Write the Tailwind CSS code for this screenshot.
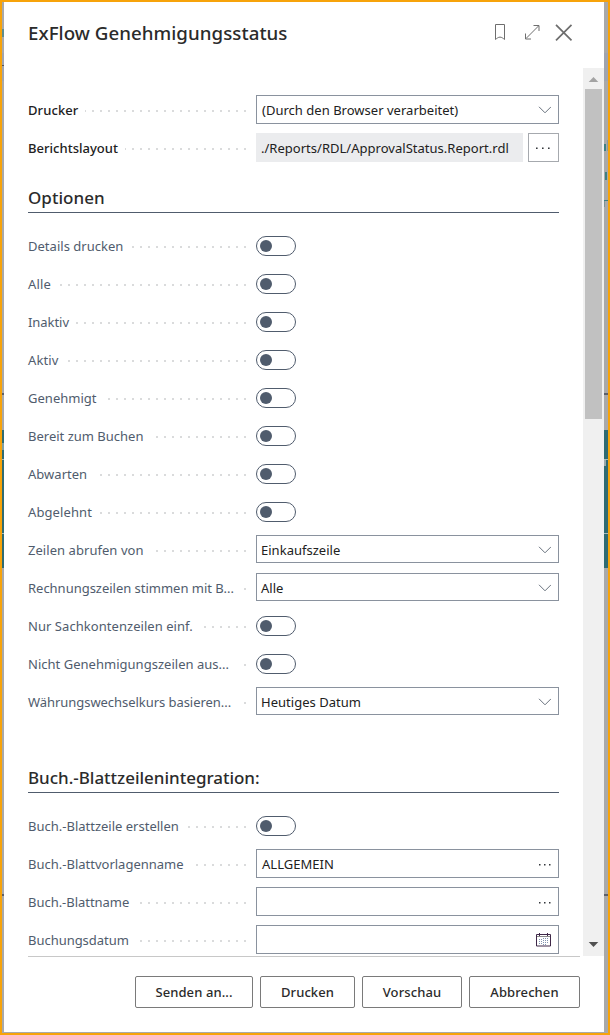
<!DOCTYPE html>
<html lang="de">
<head>
<meta charset="utf-8">
<title>ExFlow Genehmigungsstatus</title>
<script src="https://cdn.jsdelivr.net/npm/@tailwindcss/browser@4"></script>
<style>
.dots{background:linear-gradient(90deg,transparent 6px,#dadbdc 6px) right 1px top 19px/8px 2px repeat-x}
.sw{width:40px;height:20px;border:1px solid #505c6d;border-radius:10px;padding:3px;flex:none}
.sw::before{content:"";display:block;width:12px;height:12px;border-radius:50%;background:#505c6d}
</style>
</head>
<body class="h-[1035px] w-[610px] overflow-hidden bg-white font-['Noto_Sans','Open_Sans',sans-serif] text-[13px] tracking-[0.02px] text-[#212121]">
<div class="relative h-[1035px] border-2 border-[#f7a30a] bg-[#a9a9a9] pl-[2px] pr-[4px]">
  <!-- page behind the dialog -->
  <div class="absolute inset-0">
    <div class="absolute inset-x-0 top-[51px] h-[28px] bg-[#a0a4ae]"></div>
    <div class="absolute left-0 top-[27px] h-[8px] w-[2px] bg-[#5f8d8f]"></div>
    <div class="absolute left-0 top-[63px] h-px w-[2px] bg-[#555]"></div>
    <div class="absolute inset-x-0 top-[391px] h-[2px] bg-[#5c606b]"></div>
    <div class="absolute inset-x-0 top-[428px] h-[138px] bg-[#2f6b72]"></div>
    <div class="absolute inset-x-0 top-[457px] h-px bg-[#a9bcbe]"></div>
    <div class="absolute left-0 top-[441px] h-[7px] w-[2px] bg-[#7f9fa2]"></div>
    <div class="absolute right-[2px] top-[458px] h-[6px] w-[2px] bg-[#9aa9aa]"></div>
    <div class="absolute inset-x-0 top-[531px] h-px bg-[#a9bcbe]"></div>
    <div class="absolute inset-x-0 top-[892px] h-[2px] bg-[#5c606b]"></div>
    <div class="absolute right-[2px] top-[142px] h-[7px] w-[2px] bg-[#3f7f82]"></div>
    <div class="absolute right-0 top-[138px] h-[11px] w-px bg-[#8a9c9d]"></div>
    <div class="absolute right-[1px] top-[170px] h-[8px] w-[2px] bg-[#3f7f82]"></div>
    <div class="absolute right-0 top-[198px] h-px w-[4px] bg-[#3f7f82]"></div>
    <div class="absolute right-[3px] top-[199px] h-[6px] w-px bg-[#7d9293]"></div>
  </div>

  <main class="relative flex h-[1030px] w-[600px] flex-col bg-white">
    <header class="flex h-[66px] flex-none items-start pl-[24px]">
      <h1 class="mt-[15px] w-[467px] text-[18.7px] font-medium leading-[32px] tracking-[0.05px] text-[#2b2b2b]">ExFlow Genehmigungsstatus</h1>
      <svg class="mt-[22px]" width="80" height="18" fill="none" stroke="#6e6e6e">
        <path d="M.5.5h9v15c-1-.9-2.8-2.4-4.5-2.4S1.500 14.600.5 15.500z"/>
        <path d="M31 14.500 43.500 2M38.500 1.500h5.500V7M30.500 9.500V15H36"/>
        <path stroke-width="1.700" d="m61 .8 15.500 15.500m0-15.500L61 16.300"/>
      </svg>
    </header>

    <div class="flex h-[888px] flex-none">
      <section class="h-[888px] w-[579px] overflow-hidden pl-[24px] pr-[24px] pt-[23px]">
        <div class="flex h-[38px] leading-[38px]">
          <label class="w-[57px] font-medium tracking-[0.1px]">Drucker</label><i class="dots flex-1"></i>
          <div class="ml-[9px] mt-[4px] flex h-[29px] w-[303px] items-center justify-between border border-[#8a929e] pl-[5px] pr-[7px] pt-px leading-[28px]">(Durch den Browser verarbeitet)<svg width="13" height="8" fill="none" stroke="#69727e"><path d="M1 .8 7 6.800 13 .8"/></svg></div>
        </div>
        <div class="flex h-[38px] leading-[38px]">
          <label class="w-[97px] font-medium">Berichtslayout</label><i class="dots flex-1"></i>
          <div class="ml-[9px] mt-[4px] h-[29px] w-[267px] bg-[#ebecee] pl-[5px] leading-[31px]">./Reports/RDL/ApprovalStatus.Report.rdl</div>
          <button class="ml-[5px] mt-[4px] flex h-[29px] w-[31px] items-center justify-center border border-[#a6a9ae] pt-px"><svg width="15" height="3" fill="#33363b"><path d="M0 .5h1.600v1.600H0zM6 .5h1.600v1.600H6zM12 .5h1.600v1.600H12z"/></svg></button>
        </div>

        <h2 class="mb-[14px] mt-[11px] h-[35px] border-b border-[#505c6d] text-[17px] font-medium leading-[40px] text-[#2b2b2b]">Optionen</h2>

        <div class="flex h-[38px] leading-[38px] text-[#505c6d]"><label class="w-[102px]">Details drucken</label><i class="dots flex-1"></i><span class="sw ml-[9px] mr-[263px] mt-[9px]"></span></div>
        <div class="flex h-[38px] leading-[38px] text-[#505c6d]"><label class="w-[30px] tracking-[0.2px]">Alle</label><i class="dots flex-1"></i><span class="sw ml-[9px] mr-[263px] mt-[9px]"></span></div>
        <div class="flex h-[38px] leading-[38px] text-[#505c6d]"><label class="w-[46px] tracking-[-0.05px]">Inaktiv</label><i class="dots flex-1"></i><span class="sw ml-[9px] mr-[263px] mt-[9px]"></span></div>
        <div class="flex h-[38px] leading-[38px] text-[#505c6d]"><label class="w-[38px] tracking-[0.1px]">Aktiv</label><i class="dots flex-1"></i><span class="sw ml-[9px] mr-[263px] mt-[9px]"></span></div>
        <div class="flex h-[38px] leading-[38px] text-[#505c6d]"><label class="w-[78px]">Genehmigt</label><i class="dots flex-1"></i><span class="sw ml-[9px] mr-[263px] mt-[9px]"></span></div>
        <div class="flex h-[38px] leading-[38px] text-[#505c6d]"><label class="w-[126px] tracking-[0px]">Bereit zum Buchen</label><i class="dots flex-1"></i><span class="sw ml-[9px] mr-[263px] mt-[9px]"></span></div>
        <div class="flex h-[38px] leading-[38px] text-[#505c6d]"><label class="w-[70px]">Abwarten</label><i class="dots flex-1"></i><span class="sw ml-[9px] mr-[263px] mt-[9px]"></span></div>
        <div class="flex h-[38px] leading-[38px] text-[#505c6d]"><label class="w-[70px] tracking-[0.1px]">Abgelehnt</label><i class="dots flex-1"></i><span class="sw ml-[9px] mr-[263px] mt-[9px]"></span></div>
        <div class="flex h-[38px] leading-[38px] text-[#505c6d]"><label class="w-[126px] tracking-[0.05px]">Zeilen abrufen von</label><i class="dots flex-1"></i>
          <div class="ml-[9px] mt-[4px] flex h-[28px] w-[303px] items-center justify-between border border-[#8a929e] pl-[4px] pr-[7px] pt-[2px] leading-[26px] text-[#212121]">Einkaufszeile<svg width="13" height="8" fill="none" stroke="#69727e"><path d="M1 .8 7 6.800 13 .8"/></svg></div></div>
        <div class="flex h-[38px] leading-[38px] text-[#505c6d]"><label class="w-[214px] whitespace-nowrap tracking-[-0.02px]">Rechnungszeilen stimmen mit B...</label><i class="dots flex-1"></i>
          <div class="ml-[9px] mt-[4px] flex h-[28px] w-[303px] items-center justify-between border border-[#8a929e] pl-[4px] pr-[7px] pt-[2px] leading-[26px] text-[#212121]">Alle<svg width="13" height="8" fill="none" stroke="#69727e"><path d="M1 .8 7 6.800 13 .8"/></svg></div></div>
        <div class="flex h-[38px] leading-[38px] text-[#505c6d]"><label class="w-[174px] tracking-[0.05px]">Nur Sachkontenzeilen einf.</label><i class="dots flex-1"></i><span class="sw ml-[9px] mr-[263px] mt-[9px]"></span></div>
        <div class="flex h-[38px] leading-[38px] text-[#505c6d]"><label class="w-[214px] whitespace-nowrap">Nicht Genehmigungszeilen aus...</label><i class="dots flex-1"></i><span class="sw ml-[9px] mr-[263px] mt-[9px]"></span></div>
        <div class="flex h-[38px] leading-[38px] text-[#505c6d]"><label class="w-[214px] whitespace-nowrap tracking-[-0.05px]">Währungswechselkurs basieren...</label><i class="dots flex-1"></i>
          <div class="ml-[9px] mt-[4px] flex h-[28px] w-[303px] items-center justify-between border border-[#8a929e] pl-[4px] pr-[7px] pt-[2px] leading-[26px] text-[#212121]">Heutiges Datum<svg width="13" height="8" fill="none" stroke="#69727e"><path d="M1 .8 7 6.800 13 .8"/></svg></div></div>

        <h2 class="mb-[14px] mt-[37px] h-[35px] border-b border-[#505c6d] text-[17px] font-medium leading-[40px] tracking-[-0.02px] text-[#2b2b2b]">Buch.-Blattzeilenintegration:</h2>

        <div class="flex h-[38px] leading-[38px] text-[#505c6d]"><label class="w-[158px] tracking-[0px]">Buch.-Blattzeile erstellen</label><i class="dots flex-1"></i><span class="sw ml-[9px] mr-[263px] mt-[9px]"></span></div>
        <div class="flex h-[38px] leading-[38px] text-[#505c6d]"><label class="w-[166px] tracking-[0px]">Buch.-Blattvorlagenname</label><i class="dots flex-1"></i>
          <div class="ml-[9px] mt-[4px] flex h-[29px] w-[303px] items-center justify-between border border-[#8a929e] pl-[5px] pr-[7px] pt-px leading-[28px] text-[#212121]">ALLGEMEIN<svg width="13" height="3" fill="#33363b"><path d="M1 1h1.500v1.500H1zM6 1h1.500v1.500H6zM11 1h1.500v1.500H11z"/></svg></div></div>
        <div class="flex h-[38px] leading-[38px] text-[#505c6d]"><label class="w-[110px] tracking-[-0.03px]">Buch.-Blattname</label><i class="dots flex-1"></i>
          <div class="ml-[9px] mt-[4px] flex h-[29px] w-[303px] items-center justify-end border border-[#8a929e] pr-[7px] pt-px"><svg width="13" height="3" fill="#33363b"><path d="M1 1h1.500v1.500H1zM6 1h1.500v1.500H6zM11 1h1.500v1.500H11z"/></svg></div></div>
        <div class="flex h-[38px] leading-[38px] text-[#505c6d]"><label class="w-[110px] tracking-[-0.03px]">Buchungsdatum</label><i class="dots flex-1"></i>
          <div class="ml-[9px] mt-[4px] flex h-[29px] w-[303px] items-center justify-end border border-[#8a929e] pr-[7px]">
            <svg width="15" height="15" fill="none" stroke="#3f2848"><path d="M.5 2.500h14v11.500H.5z"/><path stroke="#8a8a8a" d="M1 4.500h13"/><path d="M3.500 1v3M11.500 1v3"/><path stroke="#8194b0" stroke-dasharray="1 1" d="M3.500 7v6M5.500 7v6M7.500 6v7M9.500 6v7M11.500 6v6"/></svg></div></div>
      </section>
      <div class="flex h-[888px] w-[21px] flex-col items-center bg-[#f0f0f0]">
        <svg class="flex-none" width="17" height="21" fill="#a3a3a3"><path d="M8.500 9 13.300 14H3.700z"/></svg>
        <div class="h-[330px] w-[17px] bg-[#c1c1c1]"></div>
        <svg class="mt-auto flex-none" width="17" height="21" fill="#505050"><path d="M8.500 12 3.700 7h9.600z"/></svg>
      </div>
    </div>

    <footer class="ml-[24px] flex h-[52px] w-[552px] flex-none items-end justify-end gap-[7px] border-t border-[#c8c8c8] font-medium tracking-[0.1px] text-[#2b2b2b]">
      <button class="h-[32px] w-[118px] rounded-[2px] border border-[#7a7a7a] pt-[2px]">Senden an...</button>
      <button class="h-[32px] w-[95px] rounded-[2px] border border-[#7a7a7a] pt-[2px]">Drucken</button>
      <button class="h-[32px] w-[100px] rounded-[2px] border border-[#7a7a7a] pt-[2px]">Vorschau</button>
      <button class="h-[32px] w-[111px] rounded-[2px] border border-[#7a7a7a] pt-[2px]">Abbrechen</button>
    </footer>
  </main>
</div>
</body>
</html>
